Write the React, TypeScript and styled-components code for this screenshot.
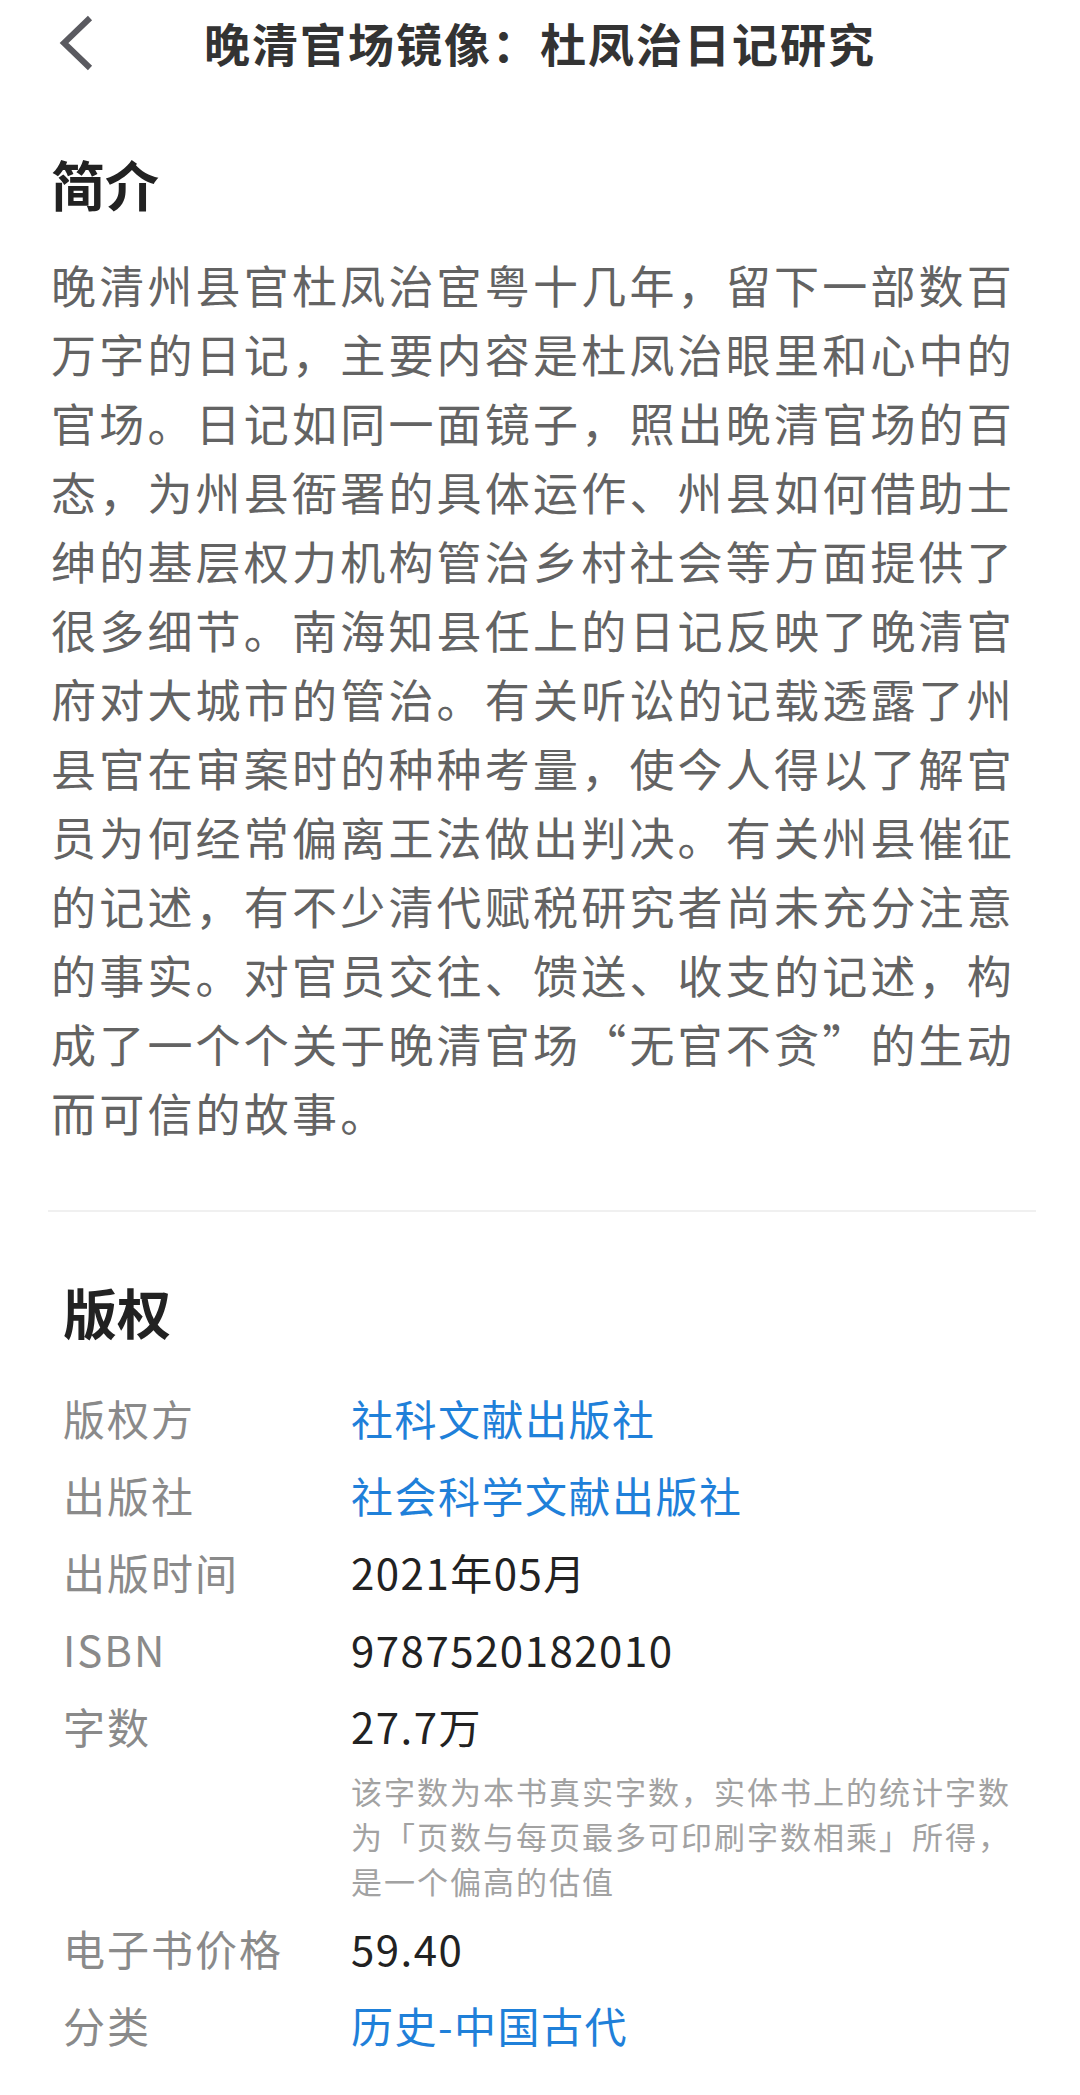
import { Fragment } from "react";
import styled, { createGlobalStyle } from "styled-components";

const GlobalStyle = createGlobalStyle`
  html, body {
    margin: 0;
    padding: 0;
    background: #ffffff;
  }
  body {
    font-family: "Noto Sans CJK SC", "Noto Sans", sans-serif;
  }
`;

const Page = styled.div`
  width: 1080px;
  min-height: 2095px;
  background: #ffffff;
  box-sizing: border-box;
  padding-bottom: 20px;
`;

const Header = styled.header`
  position: relative;
  height: 84px;
  display: flex;
  align-items: center;
  justify-content: center;
`;

const BackButton = styled.button`
  position: absolute;
  left: 46px;
  top: 12px;
  width: 60px;
  height: 62px;
  border: none;
  background: transparent;
  padding: 0;
  display: flex;
  align-items: center;
  justify-content: center;
`;

const Title = styled.h1`
  margin: 0;
  font-size: 46px;
  font-weight: 700;
  color: #333333;
  letter-spacing: 2px;
`;

const Section = styled.section<{ $indent: number }>`
  padding: 0 40px 0 ${(p) => p.$indent}px;
`;

const SectionTitle = styled.h2<{ $top: number }>`
  margin: ${(p) => p.$top}px 0 0;
  font-size: 54px;
  line-height: 76px;
  font-weight: 700;
  color: #222222;
`;

const Body = styled.p`
  margin: 28px 0 0;
  font-size: 45px;
  line-height: 69px;
  letter-spacing: 3.2px;
  color: #636363;
  width: 980px;
`;

const Divider = styled.hr`
  margin: 63px 44px 0 48px;
  border: none;
  height: 2px;
  background: #f0f0f0;
`;

const InfoList = styled.dl`
  margin: 29px 0 0;
  display: grid;
  grid-template-columns: 288px 1fr;
`;

const Label = styled.dt`
  margin: 0;
  font-size: 42px;
  line-height: 77px;
  letter-spacing: 2px;
  color: #8a8a8a;
`;

const Value = styled.dd<{ $link?: boolean }>`
  margin: 0;
  font-size: 42px;
  line-height: 77px;
  letter-spacing: 1.5px;
  color: ${(p) => (p.$link ? "#1f80d9" : "#222222")};
`;

const Note = styled.dd`
  grid-column: 2;
  margin: 4px 0 6px;
  font-size: 31px;
  line-height: 45px;
  letter-spacing: 2px;
  color: #a2a2a2;
  width: 680px;
`;

const intro =
  "晚清州县官杜凤治宦粤十几年，留下一部数百万字的日记，主要内容是杜凤治眼里和心中的官场。日记如同一面镜子，照出晚清官场的百态，为州县衙署的具体运作、州县如何借助士绅的基层权力机构管治乡村社会等方面提供了很多细节。南海知县任上的日记反映了晚清官府对大城市的管治。有关听讼的记载透露了州县官在审案时的种种考量，使今人得以了解官员为何经常偏离王法做出判决。有关州县催征的记述，有不少清代赋税研究者尚未充分注意的事实。对官员交往、馈送、收支的记述，构成了一个个关于晚清官场“无官不贪”的生动而可信的故事。";

const rows: { label: string; value: string; link?: boolean; note?: string }[] = [
  { label: "版权方", value: "社科文献出版社", link: true },
  { label: "出版社", value: "社会科学文献出版社", link: true },
  { label: "出版时间", value: "2021年05月" },
  { label: "ISBN", value: "9787520182010" },
  {
    label: "字数",
    value: "27.7万",
    note: "该字数为本书真实字数，实体书上的统计字数为「页数与每页最多可印刷字数相乘」所得，是一个偏高的估值",
  },
  { label: "电子书价格", value: "59.40" },
  { label: "分类", value: "历史-中国古代", link: true },
];

export default function App() {
  return (
    <>
      <GlobalStyle />
      <Page>
        <Header>
          <BackButton aria-label="返回">
            <svg width="40" height="58" viewBox="0 0 40 58">
              <polyline
                points="34,4 8,29 34,54"
                fill="none"
                stroke="#5a5a60"
                strokeWidth="6"
                strokeLinecap="butt"
                strokeLinejoin="miter"
              />
            </svg>
          </BackButton>
          <Title>晚清官场镜像：杜凤治日记研究</Title>
        </Header>

        <Section $indent={51}>
          <SectionTitle $top={62}>简介</SectionTitle>
          <Body>{intro}</Body>
        </Section>

        <Divider />

        <Section $indent={63}>
          <SectionTitle $top={62}>版权</SectionTitle>
          <InfoList>
            {rows.map((r) => (
              <Fragment key={r.label}>
                <Label>{r.label}</Label>
                <Value $link={r.link}>{r.value}</Value>
                {r.note && <Note>{r.note}</Note>}
              </Fragment>
            ))}
          </InfoList>
        </Section>
      </Page>
    </>
  );
}
